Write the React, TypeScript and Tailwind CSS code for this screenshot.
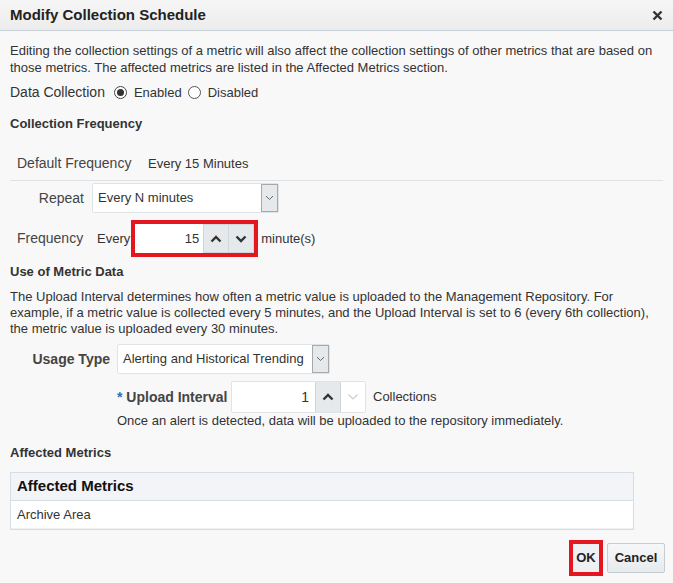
import React from "react";

function Chevron({ up, muted }: { up?: boolean; muted?: boolean }) {
  return (
    <svg width="12" height="8" viewBox="0 0 12 8">
      <path
        d={up ? "M1.5 6.5 L6 2 L10.5 6.5" : "M1.5 1.5 L6 6 L10.5 1.5"}
        fill="none"
        stroke={muted ? "#c8ced4" : "#333"}
        strokeWidth={muted ? 1.2 : 2.4}
      />
    </svg>
  );
}

function Select({ value, width }: { value: string; width: string }) {
  return (
    <div className={`flex h-[30px] ${width} items-stretch rounded-[2px] border border-[#dfe4e7] bg-white`}>
      <span className="flex flex-1 items-center pl-[5px] text-[13px] text-[#333]">{value}</span>
      <span className="flex w-[17px] items-center justify-center border border-[#a5a9ac] bg-[#e6e9eb]">
        <svg width="9" height="6" viewBox="0 0 9 6">
          <path d="M1 1 L4.5 4.5 L8 1" fill="none" stroke="#666" strokeWidth="1" />
        </svg>
      </span>
    </div>
  );
}

export default function App() {
  return (
    <div
      className="h-[583px] w-[673px] overflow-hidden bg-[#f8f8f8] text-[13px] text-[#333]"
      style={{ fontFamily: '"Liberation Sans", Arial, sans-serif' }}
    >
      <div className="flex h-[31px] items-center justify-between border-b border-[#c9d1d8] bg-gradient-to-b from-[#f6f6f6] to-[#ececec] px-[10px]">
        <span className="text-[15px] font-bold text-[#222]">Modify Collection Schedule</span>
        <svg width="11" height="11" viewBox="0 0 11 11">
          <path d="M1.5 1.5 L9.5 9.5 M9.5 1.5 L1.5 9.5" stroke="#333" strokeWidth="2.4" />
        </svg>
      </div>

      <div className="px-[10px]">
        <p className="mt-[11px] leading-[17px]">
          Editing the collection settings of a metric will also affect the collection settings of other metrics that are based on
          those metrics. The affected metrics are listed in the Affected Metrics section.
        </p>

        <div className="mt-[8px] flex h-[17px] items-center">
          <span className="mr-[9px] text-[14px] text-[#333]">Data Collection</span>
          <span className="flex h-[13px] w-[13px] items-center justify-center rounded-full border border-[#444] bg-white">
            <span className="h-[7px] w-[7px] rounded-full bg-[#333]" />
          </span>
          <span className="ml-[7px] mr-[6px]">Enabled</span>
          <span className="h-[13px] w-[13px] rounded-full border border-[#555] bg-white" />
          <span className="ml-[7px]">Disabled</span>
        </div>

        <div className="mt-[14px] font-bold leading-[17px] text-[#333]">Collection Frequency</div>

        <div className="mt-[23px] flex items-center border-b border-[#dde2e7] pb-[8px] pl-[7px] leading-[17px]">
          <span className="w-[131px] text-[14px] text-[#444]">Default Frequency</span>
          <span className="text-[#333]">Every 15 Minutes</span>
        </div>

        <div className="mt-[2px] flex items-center">
          <span className="w-[82px] pr-[8px] text-right text-[14px] text-[#444]">Repeat</span>
          <Select value="Every N minutes" width="w-[187px]" />
        </div>

        <div className="mt-[7px] flex items-center">
          <span className="w-[87px] pl-[7px] text-[14px] text-[#444]">Frequency</span>
          <span>Every</span>
          <div className="ml-[1px] flex h-[37px] items-center border-[4px] border-[#e4161f] bg-white">
            <span className="flex h-[29px] w-[68px] items-center justify-end pr-[4px]">15</span>
            <span className="flex h-[29px] w-[26px] items-center justify-center border border-[#cfd6dc] bg-[#e5e9ec]">
              <Chevron up />
            </span>
            <span className="flex h-[29px] w-[25px] items-center justify-center border border-l-0 border-[#cfd6dc] bg-[#e5e9ec]">
              <Chevron />
            </span>
          </div>
          <span className="ml-[3px]">minute(s)</span>
        </div>

        <div className="mt-[6px] font-bold leading-[17px] text-[#333]">Use of Metric Data</div>

        <p className="mt-[9px] leading-[16px]">
          The Upload Interval determines how often a metric value is uploaded to the Management Repository. For
          example, if a metric value is collected every 5 minutes, and the Upload Interval is set to 6 (every 6th collection),
          the metric value is uploaded every 30 minutes.
        </p>

        <div className="mt-[7px] flex items-center">
          <span className="w-[107px] pr-[7px] text-right text-[14px] font-bold text-[#444]">Usage Type</span>
          <Select value="Alerting and Historical Trending" width="w-[213px]" />
        </div>

        <div className="mt-[7px] flex items-center pl-[107px]">
          <span className="w-[114px] text-[14px] font-bold text-[#444]">
            <span className="text-[#2e6db4]">*</span> Upload Interval
          </span>
          <div className="flex h-[32px] items-stretch rounded-[2px] border border-[#dfe4e7] bg-white">
            <span className="flex w-[83px] items-center justify-end pr-[6px] text-[14px]">1</span>
            <span className="flex w-[26px] items-center justify-center border-x border-[#cfd6dc] bg-[#e5e9ec]">
              <Chevron up />
            </span>
            <span className="flex w-[24px] items-center justify-center">
              <Chevron muted />
            </span>
          </div>
          <span className="ml-[7px]">Collections</span>
        </div>

        <div className="mt-[-1px] pl-[107px] leading-[17px]">
          Once an alert is detected, data will be uploaded to the repository immediately.
        </div>

        <div className="mt-[15px] font-bold leading-[17px] text-[#333]">Affected Metrics</div>

        <div className="mt-[11px] w-[624px] border border-[#d6dee5] bg-white">
          <div className="flex h-[28px] items-center border-b border-[#d6dee5] bg-[#f2f4f7] pl-[6px] text-[15px] font-bold text-[#111]">
            Affected Metrics
          </div>
          <div className="flex h-[28px] items-center border-b border-[#eef1f4] pl-[6px] text-[#333]">Archive Area</div>
        </div>

        <div className="mr-[-2px] mt-[10px] flex items-center justify-end gap-[4px]">
          <div className="flex h-[36px] w-[34px] items-center justify-center border-[4px] border-[#e4161f] bg-[#eef0f2] font-bold text-[#222]">
            OK
          </div>
          <div className="flex h-[30px] w-[58px] items-center justify-center rounded-[2px] border border-[#c5ccd2] bg-gradient-to-b from-[#f6f7f8] to-[#e8ebee] font-bold text-[#222]">
            Cancel
          </div>
        </div>
      </div>
    </div>
  );
}
